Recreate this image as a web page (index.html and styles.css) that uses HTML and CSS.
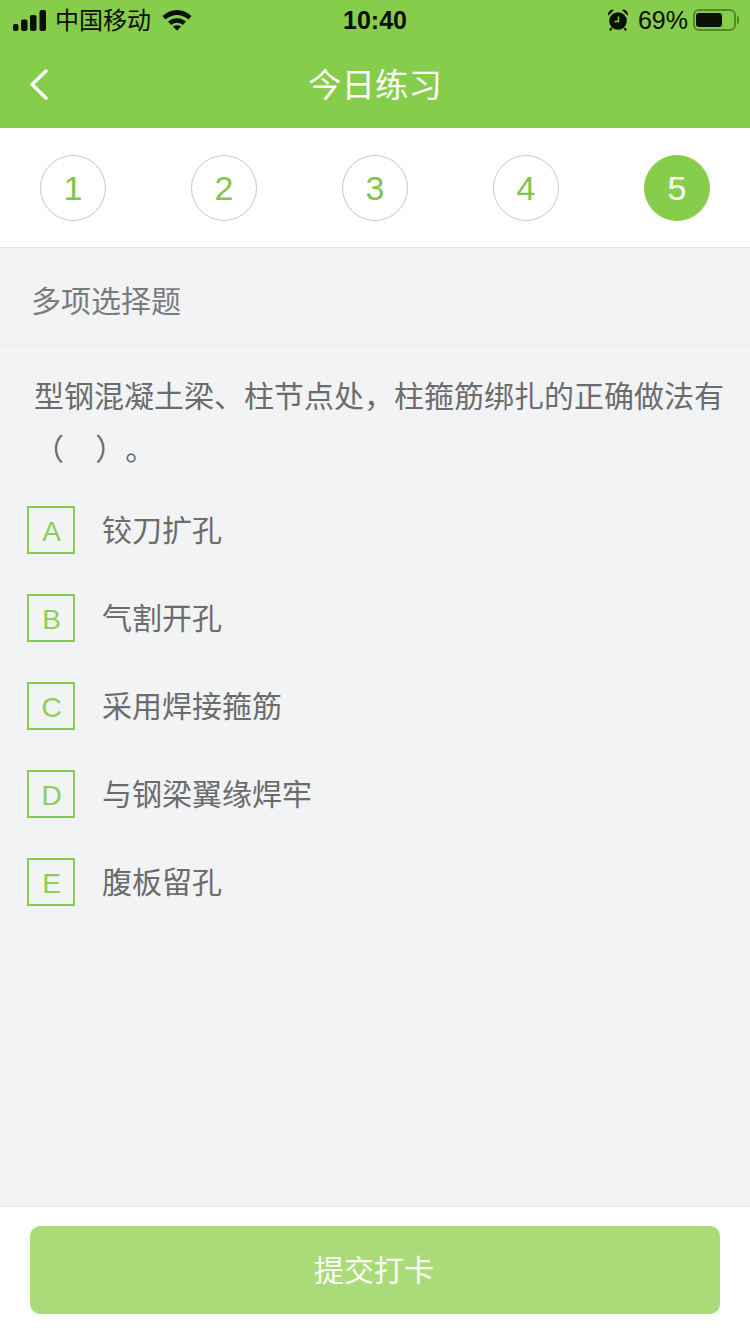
FILE: index.html
```html
<!doctype html>
<html lang="zh-CN">
  <head>
    <meta charset="UTF-8" />
    <meta name="viewport" content="width=device-width, initial-scale=1.0" />
    <title>今日练习</title>
    <link rel="stylesheet" href="styles.css">
  </head>
  <body>
    <div class="header">
      <div class="status-bar">
        <div class="status-left">
          <svg class="signal" width="33" height="21" viewBox="0 0 33 21">
            <rect x="0" y="14" width="5.500" height="7" rx="2" />
            <rect x="8" y="9.500" width="6.500" height="11.500" rx="2" />
            <rect x="17" y="5" width="6.500" height="16" rx="2" />
            <rect x="26.500" y="0" width="6.500" height="21" rx="2" />
          </svg>
          <span class="carrier">中国移动</span>
          <svg class="wifi" width="30" height="22" viewBox="0 0 30 22">
            <path d="M0.500 7C9 -1 21 -1 29.500 7L26.500 10.500C19.500 4.500 10.500 4.500 3.500 10.500Z" />
            <path d="M6 12.500C11.500 8 18.500 8 24 12.500L20.800 16C17 13 13 13 9.200 16Z" />
            <path d="M11 17.500C13.500 15.800 16.500 15.800 19 17.500L15 21.800Z" />
          </svg>
        </div>
        <div class="clock">10:40</div>
        <div class="status-right">
          <svg class="alarm" width="22" height="22" viewBox="0 0 22 22">
            <circle cx="11" cy="12" r="8.800" />
            <path d="M1 6C1 2 4 0 7 1L1.500 6.500ZM21 6C21 2 18 0 15 1L20.500 6.500Z" />
            <path class="alarm-feet" d="M4.500 19L3 21.500M17.500 19L19 21.500" />
            <path class="alarm-hand" d="M11.500 7.500V12.500H7.500" />
          </svg>
          <span class="battery-pct">69%</span>
          <div class="battery"><div class="battery-fill"></div></div>
          <div class="battery-cap"></div>
        </div>
      </div>
      <div class="nav-bar">
        <svg class="back" width="20" height="35" viewBox="0 0 20 35">
          <path d="M17 4L3 17.500L17 31" />
        </svg>
        <div class="nav-title">今日练习</div>
      </div>
    </div>

    <div class="steps">
      <div class="step">1</div>
      <div class="step">2</div>
      <div class="step">3</div>
      <div class="step">4</div>
      <div class="step active">5</div>
    </div>

    <div class="main">
      <div class="type-title">多项选择题</div>
      <div class="question">型钢混凝土梁、柱节点处，柱箍筋绑扎的正确做法有（&nbsp;&nbsp;&nbsp;&nbsp;）。</div>
      <div class="options">
        <div class="option"><div class="letter">A</div><div class="option-text">铰刀扩孔</div></div>
        <div class="option"><div class="letter">B</div><div class="option-text">气割开孔</div></div>
        <div class="option"><div class="letter">C</div><div class="option-text">采用焊接箍筋</div></div>
        <div class="option"><div class="letter">D</div><div class="option-text">与钢梁翼缘焊牢</div></div>
        <div class="option"><div class="letter">E</div><div class="option-text">腹板留孔</div></div>
      </div>
    </div>

    <div class="footer">
      <div class="submit">提交打卡</div>
    </div>
  </body>
</html>
```

FILE: styles.css
```css
* {
  box-sizing: border-box;
}
body {
  margin: 0;
  width: 750px;
  height: 1334px;
  display: flex;
  flex-direction: column;
  overflow: hidden;
  background-color: #f1f3f5;
  font-family: "Liberation Sans", "Noto Sans CJK SC", sans-serif;
  color: #6c6c6c;
}
.header {
  height: 128px;
  background-color: #86cd4b;
}
.status-bar {
  height: 40px;
  display: flex;
  align-items: center;
  justify-content: space-between;
  padding: 0 11px 0 13px;
  color: #0a0f05;
  position: relative;
}
.status-left,
.status-right {
  display: flex;
  align-items: center;
}
.signal {
  fill: #0a0f05;
  margin-right: 9px;
}
.carrier {
  font-size: 24px;
  margin-bottom: 3px;
}
.wifi {
  fill: #0a0f05;
  margin-left: 11px;
}
.clock {
  position: absolute;
  left: 0;
  right: 0;
  text-align: center;
  font-size: 25px;
  font-weight: bold;
}
.alarm {
  fill: #0a0f05;
  margin-right: 9px;
}
.alarm-feet {
  fill: none;
  stroke: #0a0f05;
  stroke-width: 2;
}
.alarm-hand {
  fill: none;
  stroke: #86cd4b;
  stroke-width: 1.500;
}
.battery-pct {
  font-size: 25px;
  margin-right: 5px;
}
.battery {
  width: 43px;
  height: 22px;
  border: 2px solid #4f8a2c;
  border-radius: 6px;
  padding: 2px 1px;
}
.battery-fill {
  width: 26px;
  height: 14px;
  background-color: #0a0f05;
  border-radius: 3px;
}
.battery-cap {
  width: 2px;
  height: 8px;
  margin-left: 1px;
  background-color: #4f8a2c;
  border-radius: 0 2px 2px 0;
}
.nav-bar {
  height: 88px;
  display: flex;
  align-items: center;
  justify-content: center;
  padding-bottom: 4px;
  position: relative;
}
.back {
  position: absolute;
  left: 29px;
  top: 27px;
  fill: none;
  stroke: #fff;
  stroke-width: 3.500;
  stroke-linecap: round;
  stroke-linejoin: round;
}
.nav-title {
  font-size: 33.500px;
  color: #fff;
}
.steps {
  height: 120px;
  padding: 27px 40px 0;
  display: flex;
  justify-content: space-between;
  align-items: flex-start;
  background-color: #fff;
  border-bottom: 1px solid #e8e8e8;
}
.step {
  width: 66px;
  height: 66px;
  border: 1px solid #c8c8c8;
  border-radius: 50%;
  display: flex;
  align-items: center;
  justify-content: center;
  font-size: 34px;
  color: #7fc64a;
}
.step.active {
  background-color: #86cd4b;
  border-color: #86cd4b;
  color: #fff;
}
.main {
  flex: 1;
}
.type-title {
  height: 98px;
  padding: 4px 0 0 31px;
  display: flex;
  align-items: center;
  font-size: 30px;
  color: #7b7b7b;
  border-bottom: 1px solid #e9ebed;
}
.question {
  padding: 24px 25px 0 34px;
  font-size: 30px;
  line-height: 53px;
  text-spacing-trim: space-all;
  word-spacing: -0.500px;
}
.options {
  padding: 30px 0 0 27px;
  display: flex;
  flex-direction: column;
  gap: 40px;
}
.option {
  display: flex;
  align-items: center;
  gap: 27px;
  font-size: 30px;
  height: 48px;
}
.option-text {
  padding-bottom: 5px;
}
.letter {
  width: 48px;
  height: 48px;
  border: 2px solid #86cd4b;
  display: flex;
  align-items: center;
  justify-content: center;
  padding: 3px 0 0 1px;
  font-size: 28px;
  color: #8ccf56;
}
.footer {
  height: 128px;
  padding: 19px 30px 0;
  background-color: #fff;
  border-top: 1px solid #e8e8e8;
}
.submit {
  height: 88px;
  border-radius: 10px;
  background-color: #a9dc78;
  display: flex;
  align-items: center;
  justify-content: center;
  padding: 0 2px 4px 0;
  font-size: 30px;
  color: #fff;
}
```
